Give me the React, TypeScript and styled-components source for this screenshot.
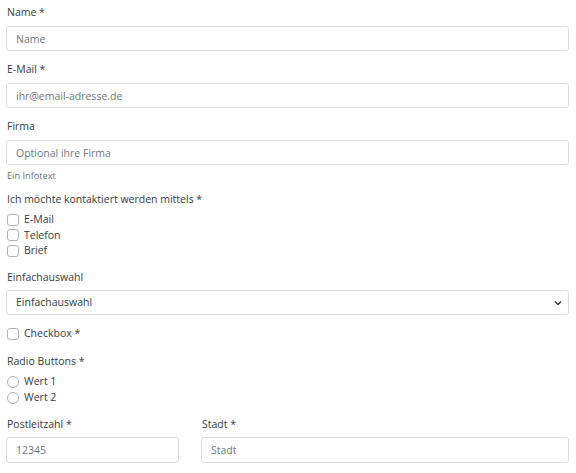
import styled, { createGlobalStyle } from 'styled-components'

const GlobalStyle = createGlobalStyle`
  html, body {
    margin: 0;
    background: #fff;
  }
  body {
    font-family: 'Open Sans', 'Noto Sans', sans-serif;
    font-size: 10.5px;
    color: #353a3f;
  }
  * { box-sizing: border-box; }
`

const Form = styled.form`
  padding: 5px 7px 0 6px;
`

const Group = styled.div<{ $mb?: number }>`
  display: flex;
  flex-direction: column;
  margin-bottom: ${(p) => p.$mb ?? 10.75}px;
`

const Label = styled.label<{ $mb?: number }>`
  display: block;
  line-height: 15.75px;
  margin-bottom: ${(p) => p.$mb ?? 5}px;
  padding-left: 1px;
`

const fieldBase = `
  display: block;
  width: 100%;
  height: 25.5px;
  padding: 0 9px;
  font-family: inherit;
  font-size: 10.5px;
  color: #353a3f;
  background: #fff;
  border: 1px solid #dadde1;
  border-radius: 3px;
  outline: none;
`

const Input = styled.input`
  ${fieldBase}
  &::placeholder {
    color: #6f767d;
  }
`

const SelectWrap = styled.div`
  position: relative;
`

const Select = styled.select`
  ${fieldBase}
  appearance: none;
`

const Chevron = styled.svg`
  position: absolute;
  right: 7px;
  top: 10px;
  pointer-events: none;
`

const Help = styled.small`
  display: block;
  margin-top: 4px;
  font-size: 9.2px;
  line-height: 13.5px;
  color: #6c737a;
  padding-left: 1px;
`

const CheckRow = styled.label`
  display: flex;
  align-items: center;
  gap: 5px;
  height: 15.75px;
  padding-left: 1px;
  line-height: 15.75px;
`

const Box = styled.span<{ $round?: boolean }>`
  width: 12px;
  height: 12px;
  border: 1px solid #aeb3b8;
  border-radius: ${(p) => (p.$round ? '50%' : '3px')};
  background: #fff;
  flex-shrink: 0;
`

const Row = styled.div`
  display: grid;
  grid-template-columns: 173px 1fr;
  column-gap: 22px;
`

export default function App() {
  return (
    <>
      <GlobalStyle />
      <Form>
        <Group>
          <Label>Name *</Label>
          <Input placeholder="Name" />
        </Group>
        <Group>
          <Label>E-Mail *</Label>
          <Input placeholder="ihr@email-adresse.de" />
        </Group>
        <Group $mb={8.75}>
          <Label>Firma</Label>
          <Input placeholder="Optional ihre Firma" />
          <Help>Ein Infotext</Help>
        </Group>
        <Group>
          <Label $mb={4.5}>Ich möchte kontaktiert werden mittels *</Label>
          {['E-Mail', 'Telefon', 'Brief'].map((o) => (
            <CheckRow key={o}>
              <Box />
              {o}
            </CheckRow>
          ))}
        </Group>
        <Group>
          <Label $mb={4}>Einfachauswahl</Label>
          <SelectWrap>
            <Select defaultValue="Einfachauswahl">
              <option>Einfachauswahl</option>
            </Select>
            <Chevron width="8" height="6" viewBox="0 0 8 6">
              <path d="M1 1.5 L4 4.5 L7 1.5" fill="none" stroke="#353a3f" strokeWidth="1.5" />
            </Chevron>
          </SelectWrap>
        </Group>
        <Group $mb={12}>
          <CheckRow>
            <Box />
            Checkbox *
          </CheckRow>
        </Group>
        <Group $mb={11.5}>
          <Label $mb={5}>Radio Buttons *</Label>
          {['Wert 1', 'Wert 2'].map((o) => (
            <CheckRow key={o}>
              <Box $round />
              {o}
            </CheckRow>
          ))}
        </Group>
        <Row>
          <Group>
            <Label $mb={4}>Postleitzahl *</Label>
            <Input placeholder="12345" />
          </Group>
          <Group>
            <Label $mb={4}>Stadt *</Label>
            <Input placeholder="Stadt" />
          </Group>
        </Row>
      </Form>
    </>
  )
}
